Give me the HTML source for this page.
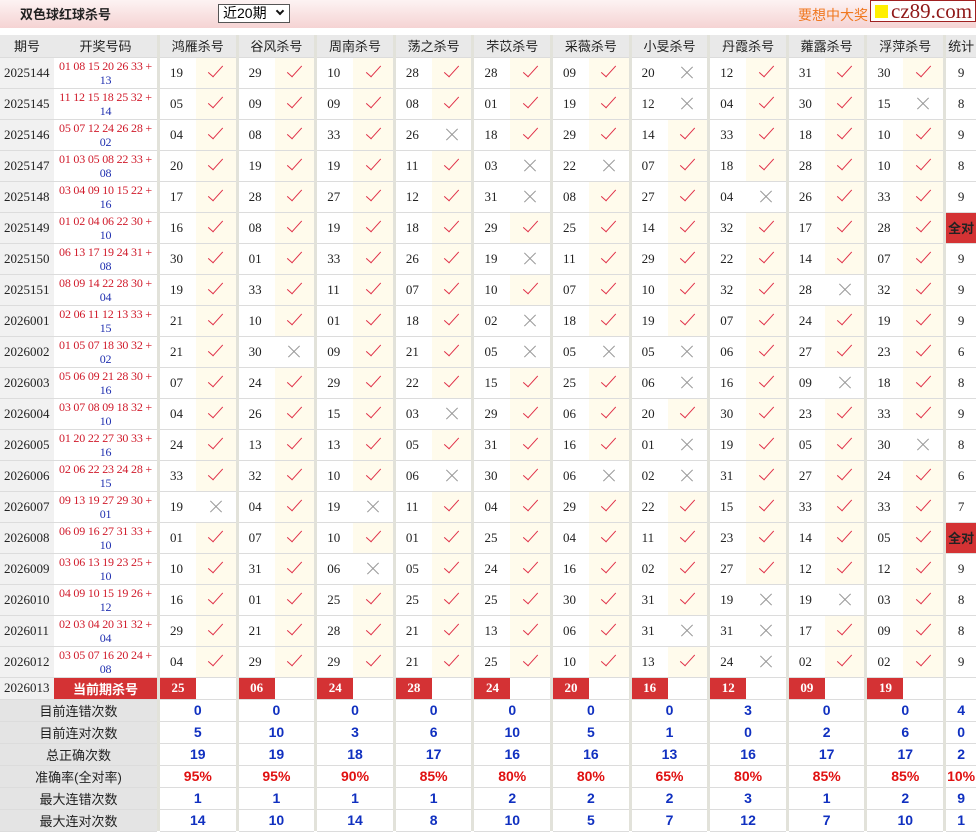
<!DOCTYPE html>
<html><head><meta charset="utf-8"><style>
*{margin:0;padding:0;box-sizing:border-box}
body{width:976px;height:829px;overflow:hidden;background:#fff;font-family:"Liberation Serif","Noto Serif CJK SC",serif;position:relative}
.top{position:absolute;left:0;top:0;width:976px;height:28px;background:linear-gradient(#fdf3f3,#f5d3d3)}
.title{position:absolute;left:20px;top:4px;font:bold 13px "Liberation Sans","Noto Sans CJK SC",sans-serif;color:#222}
.sel{position:absolute;left:218px;top:4px;width:72px;height:19px;border:1px solid #555;background:#fff;font:14px "Liberation Sans","Noto Sans CJK SC",sans-serif;padding-left:4px;line-height:17px}
.sel span{position:absolute;right:6px;top:3px;width:6px;height:6px;border-right:2px solid #111;border-bottom:2px solid #111;transform:rotate(45deg)}
.ad{position:absolute;left:798px;top:5px;font:14px "Liberation Sans","Noto Sans CJK SC",sans-serif;color:#f07820}
.box{position:absolute;left:870px;top:0;width:106px;height:22px;border:1px solid #a02020;background:#fff;font:21px "Liberation Serif",serif;color:#901818;line-height:20px;padding-left:20px}
.box:before{content:"";position:absolute;left:4px;top:4px;width:13px;height:13px;background:#ffef00}
table{position:absolute;left:0;top:35px;width:976px;table-layout:fixed;border-collapse:collapse}
td,th{padding:0;border-bottom:1px solid #dcdcdc;text-align:center;font-size:12px;white-space:nowrap;overflow:hidden}
th{height:22px;background:#e9e9e9;font:13px "Liberation Sans","Noto Sans CJK SC",sans-serif;color:#222;font-weight:normal}
td.s{background:#e2e2da;border-bottom:none}
tr.d td{height:31px;font-size:13px;color:#222}
tr.d td.v{text-align:left;padding-left:10px}
td.q{background:#f1f1f1;font-size:13px;color:#222;text-align:left;padding-left:4px}
tr.d td.k{font-size:12px;line-height:14px;color:#d01a2a;letter-spacing:-0.2px}
td.k em{font-style:normal;color:#2030b0}
td.y{background:#fffbec}
td.y i{display:block;width:7px;height:15px;border-right:1.6px solid #e03048;border-bottom:1.6px solid #e03048;transform:rotate(42deg);margin:-6px auto 0}
td.n i{display:block;width:14px;height:14px;margin:0 auto;position:relative}
td.n i:before,td.n i:after{content:"";position:absolute;left:-1px;top:6px;width:16px;height:1px;background:#999;transform:rotate(45deg)}
td.n i:after{transform:rotate(-45deg)}
td.all{background:#d43234;color:#fff;font:bold 12px "Liberation Sans","Noto Sans CJK SC",sans-serif}
tr.c td{height:22px;font-size:13px}
td.kk{background:#d43234;color:#fff;font:bold 13px "Liberation Sans","Noto Sans CJK SC",sans-serif}
td.r{background:#d43234;color:#fff;font:bold 13px "Liberation Serif",serif}
tr.t td{height:22px;font:bold 14px "Liberation Sans",sans-serif;color:#1030c0}
tr.t td.l{background:#e4e4e4;font:13px "Liberation Sans","Noto Sans CJK SC",sans-serif;color:#222}
tr.p td{color:#e01010}
</style></head><body>
<div class="top"></div>
<div class="title">双色球红球杀号</div>
<div class="sel">近20期<span></span></div>
<div class="ad">要想中大奖，</div>
<div class="box">cz89.com</div>
<table>
<colgroup><col style="width:54px"><col style="width:103px">
<col style="width:3px"><col style="width:36px"><col style="width:39.6px">
<col style="width:3px"><col style="width:36px"><col style="width:39.6px">
<col style="width:3px"><col style="width:36px"><col style="width:39.6px">
<col style="width:3px"><col style="width:36px"><col style="width:39.6px">
<col style="width:3px"><col style="width:36px"><col style="width:39.6px">
<col style="width:3px"><col style="width:36px"><col style="width:39.6px">
<col style="width:3px"><col style="width:36px"><col style="width:39.6px">
<col style="width:3px"><col style="width:36px"><col style="width:39.6px">
<col style="width:3px"><col style="width:36px"><col style="width:39.6px">
<col style="width:3px"><col style="width:36px"><col style="width:39.6px">
<col style="width:3px"><col style="width:30px"></colgroup>
<tr><th>期号</th><th>开奖号码</th><td class="s"></td><th colspan="2">鸿雁杀号</th><td class="s"></td><th colspan="2">谷风杀号</th><td class="s"></td><th colspan="2">周南杀号</th><td class="s"></td><th colspan="2">荡之杀号</th><td class="s"></td><th colspan="2">芣苡杀号</th><td class="s"></td><th colspan="2">采薇杀号</th><td class="s"></td><th colspan="2">小旻杀号</th><td class="s"></td><th colspan="2">丹霞杀号</th><td class="s"></td><th colspan="2">蕹露杀号</th><td class="s"></td><th colspan="2">浮萍杀号</th><td class="s"></td><th>统计</th></tr>
<tr class="d"><td class="q">2025144</td><td class="k">01 08 15 20 26 33 +<br><em>13</em></td><td class="s"></td><td class="v">19</td><td class="y"><i></i></td><td class="s"></td><td class="v">29</td><td class="y"><i></i></td><td class="s"></td><td class="v">10</td><td class="y"><i></i></td><td class="s"></td><td class="v">28</td><td class="y"><i></i></td><td class="s"></td><td class="v">28</td><td class="y"><i></i></td><td class="s"></td><td class="v">09</td><td class="y"><i></i></td><td class="s"></td><td class="v">20</td><td class="n"><i></i></td><td class="s"></td><td class="v">12</td><td class="y"><i></i></td><td class="s"></td><td class="v">31</td><td class="y"><i></i></td><td class="s"></td><td class="v">30</td><td class="y"><i></i></td><td class="s"></td><td>9</td></tr>
<tr class="d"><td class="q">2025145</td><td class="k">11 12 15 18 25 32 +<br><em>14</em></td><td class="s"></td><td class="v">05</td><td class="y"><i></i></td><td class="s"></td><td class="v">09</td><td class="y"><i></i></td><td class="s"></td><td class="v">09</td><td class="y"><i></i></td><td class="s"></td><td class="v">08</td><td class="y"><i></i></td><td class="s"></td><td class="v">01</td><td class="y"><i></i></td><td class="s"></td><td class="v">19</td><td class="y"><i></i></td><td class="s"></td><td class="v">12</td><td class="n"><i></i></td><td class="s"></td><td class="v">04</td><td class="y"><i></i></td><td class="s"></td><td class="v">30</td><td class="y"><i></i></td><td class="s"></td><td class="v">15</td><td class="n"><i></i></td><td class="s"></td><td>8</td></tr>
<tr class="d"><td class="q">2025146</td><td class="k">05 07 12 24 26 28 +<br><em>02</em></td><td class="s"></td><td class="v">04</td><td class="y"><i></i></td><td class="s"></td><td class="v">08</td><td class="y"><i></i></td><td class="s"></td><td class="v">33</td><td class="y"><i></i></td><td class="s"></td><td class="v">26</td><td class="n"><i></i></td><td class="s"></td><td class="v">18</td><td class="y"><i></i></td><td class="s"></td><td class="v">29</td><td class="y"><i></i></td><td class="s"></td><td class="v">14</td><td class="y"><i></i></td><td class="s"></td><td class="v">33</td><td class="y"><i></i></td><td class="s"></td><td class="v">18</td><td class="y"><i></i></td><td class="s"></td><td class="v">10</td><td class="y"><i></i></td><td class="s"></td><td>9</td></tr>
<tr class="d"><td class="q">2025147</td><td class="k">01 03 05 08 22 33 +<br><em>08</em></td><td class="s"></td><td class="v">20</td><td class="y"><i></i></td><td class="s"></td><td class="v">19</td><td class="y"><i></i></td><td class="s"></td><td class="v">19</td><td class="y"><i></i></td><td class="s"></td><td class="v">11</td><td class="y"><i></i></td><td class="s"></td><td class="v">03</td><td class="n"><i></i></td><td class="s"></td><td class="v">22</td><td class="n"><i></i></td><td class="s"></td><td class="v">07</td><td class="y"><i></i></td><td class="s"></td><td class="v">18</td><td class="y"><i></i></td><td class="s"></td><td class="v">28</td><td class="y"><i></i></td><td class="s"></td><td class="v">10</td><td class="y"><i></i></td><td class="s"></td><td>8</td></tr>
<tr class="d"><td class="q">2025148</td><td class="k">03 04 09 10 15 22 +<br><em>16</em></td><td class="s"></td><td class="v">17</td><td class="y"><i></i></td><td class="s"></td><td class="v">28</td><td class="y"><i></i></td><td class="s"></td><td class="v">27</td><td class="y"><i></i></td><td class="s"></td><td class="v">12</td><td class="y"><i></i></td><td class="s"></td><td class="v">31</td><td class="n"><i></i></td><td class="s"></td><td class="v">08</td><td class="y"><i></i></td><td class="s"></td><td class="v">27</td><td class="y"><i></i></td><td class="s"></td><td class="v">04</td><td class="n"><i></i></td><td class="s"></td><td class="v">26</td><td class="y"><i></i></td><td class="s"></td><td class="v">33</td><td class="y"><i></i></td><td class="s"></td><td>9</td></tr>
<tr class="d"><td class="q">2025149</td><td class="k">01 02 04 06 22 30 +<br><em>10</em></td><td class="s"></td><td class="v">16</td><td class="y"><i></i></td><td class="s"></td><td class="v">08</td><td class="y"><i></i></td><td class="s"></td><td class="v">19</td><td class="y"><i></i></td><td class="s"></td><td class="v">18</td><td class="y"><i></i></td><td class="s"></td><td class="v">29</td><td class="y"><i></i></td><td class="s"></td><td class="v">25</td><td class="y"><i></i></td><td class="s"></td><td class="v">14</td><td class="y"><i></i></td><td class="s"></td><td class="v">32</td><td class="y"><i></i></td><td class="s"></td><td class="v">17</td><td class="y"><i></i></td><td class="s"></td><td class="v">28</td><td class="y"><i></i></td><td class="s"></td><td class="all">全对</td></tr>
<tr class="d"><td class="q">2025150</td><td class="k">06 13 17 19 24 31 +<br><em>08</em></td><td class="s"></td><td class="v">30</td><td class="y"><i></i></td><td class="s"></td><td class="v">01</td><td class="y"><i></i></td><td class="s"></td><td class="v">33</td><td class="y"><i></i></td><td class="s"></td><td class="v">26</td><td class="y"><i></i></td><td class="s"></td><td class="v">19</td><td class="n"><i></i></td><td class="s"></td><td class="v">11</td><td class="y"><i></i></td><td class="s"></td><td class="v">29</td><td class="y"><i></i></td><td class="s"></td><td class="v">22</td><td class="y"><i></i></td><td class="s"></td><td class="v">14</td><td class="y"><i></i></td><td class="s"></td><td class="v">07</td><td class="y"><i></i></td><td class="s"></td><td>9</td></tr>
<tr class="d"><td class="q">2025151</td><td class="k">08 09 14 22 28 30 +<br><em>04</em></td><td class="s"></td><td class="v">19</td><td class="y"><i></i></td><td class="s"></td><td class="v">33</td><td class="y"><i></i></td><td class="s"></td><td class="v">11</td><td class="y"><i></i></td><td class="s"></td><td class="v">07</td><td class="y"><i></i></td><td class="s"></td><td class="v">10</td><td class="y"><i></i></td><td class="s"></td><td class="v">07</td><td class="y"><i></i></td><td class="s"></td><td class="v">10</td><td class="y"><i></i></td><td class="s"></td><td class="v">32</td><td class="y"><i></i></td><td class="s"></td><td class="v">28</td><td class="n"><i></i></td><td class="s"></td><td class="v">32</td><td class="y"><i></i></td><td class="s"></td><td>9</td></tr>
<tr class="d"><td class="q">2026001</td><td class="k">02 06 11 12 13 33 +<br><em>15</em></td><td class="s"></td><td class="v">21</td><td class="y"><i></i></td><td class="s"></td><td class="v">10</td><td class="y"><i></i></td><td class="s"></td><td class="v">01</td><td class="y"><i></i></td><td class="s"></td><td class="v">18</td><td class="y"><i></i></td><td class="s"></td><td class="v">02</td><td class="n"><i></i></td><td class="s"></td><td class="v">18</td><td class="y"><i></i></td><td class="s"></td><td class="v">19</td><td class="y"><i></i></td><td class="s"></td><td class="v">07</td><td class="y"><i></i></td><td class="s"></td><td class="v">24</td><td class="y"><i></i></td><td class="s"></td><td class="v">19</td><td class="y"><i></i></td><td class="s"></td><td>9</td></tr>
<tr class="d"><td class="q">2026002</td><td class="k">01 05 07 18 30 32 +<br><em>02</em></td><td class="s"></td><td class="v">21</td><td class="y"><i></i></td><td class="s"></td><td class="v">30</td><td class="n"><i></i></td><td class="s"></td><td class="v">09</td><td class="y"><i></i></td><td class="s"></td><td class="v">21</td><td class="y"><i></i></td><td class="s"></td><td class="v">05</td><td class="n"><i></i></td><td class="s"></td><td class="v">05</td><td class="n"><i></i></td><td class="s"></td><td class="v">05</td><td class="n"><i></i></td><td class="s"></td><td class="v">06</td><td class="y"><i></i></td><td class="s"></td><td class="v">27</td><td class="y"><i></i></td><td class="s"></td><td class="v">23</td><td class="y"><i></i></td><td class="s"></td><td>6</td></tr>
<tr class="d"><td class="q">2026003</td><td class="k">05 06 09 21 28 30 +<br><em>16</em></td><td class="s"></td><td class="v">07</td><td class="y"><i></i></td><td class="s"></td><td class="v">24</td><td class="y"><i></i></td><td class="s"></td><td class="v">29</td><td class="y"><i></i></td><td class="s"></td><td class="v">22</td><td class="y"><i></i></td><td class="s"></td><td class="v">15</td><td class="y"><i></i></td><td class="s"></td><td class="v">25</td><td class="y"><i></i></td><td class="s"></td><td class="v">06</td><td class="n"><i></i></td><td class="s"></td><td class="v">16</td><td class="y"><i></i></td><td class="s"></td><td class="v">09</td><td class="n"><i></i></td><td class="s"></td><td class="v">18</td><td class="y"><i></i></td><td class="s"></td><td>8</td></tr>
<tr class="d"><td class="q">2026004</td><td class="k">03 07 08 09 18 32 +<br><em>10</em></td><td class="s"></td><td class="v">04</td><td class="y"><i></i></td><td class="s"></td><td class="v">26</td><td class="y"><i></i></td><td class="s"></td><td class="v">15</td><td class="y"><i></i></td><td class="s"></td><td class="v">03</td><td class="n"><i></i></td><td class="s"></td><td class="v">29</td><td class="y"><i></i></td><td class="s"></td><td class="v">06</td><td class="y"><i></i></td><td class="s"></td><td class="v">20</td><td class="y"><i></i></td><td class="s"></td><td class="v">30</td><td class="y"><i></i></td><td class="s"></td><td class="v">23</td><td class="y"><i></i></td><td class="s"></td><td class="v">33</td><td class="y"><i></i></td><td class="s"></td><td>9</td></tr>
<tr class="d"><td class="q">2026005</td><td class="k">01 20 22 27 30 33 +<br><em>16</em></td><td class="s"></td><td class="v">24</td><td class="y"><i></i></td><td class="s"></td><td class="v">13</td><td class="y"><i></i></td><td class="s"></td><td class="v">13</td><td class="y"><i></i></td><td class="s"></td><td class="v">05</td><td class="y"><i></i></td><td class="s"></td><td class="v">31</td><td class="y"><i></i></td><td class="s"></td><td class="v">16</td><td class="y"><i></i></td><td class="s"></td><td class="v">01</td><td class="n"><i></i></td><td class="s"></td><td class="v">19</td><td class="y"><i></i></td><td class="s"></td><td class="v">05</td><td class="y"><i></i></td><td class="s"></td><td class="v">30</td><td class="n"><i></i></td><td class="s"></td><td>8</td></tr>
<tr class="d"><td class="q">2026006</td><td class="k">02 06 22 23 24 28 +<br><em>15</em></td><td class="s"></td><td class="v">33</td><td class="y"><i></i></td><td class="s"></td><td class="v">32</td><td class="y"><i></i></td><td class="s"></td><td class="v">10</td><td class="y"><i></i></td><td class="s"></td><td class="v">06</td><td class="n"><i></i></td><td class="s"></td><td class="v">30</td><td class="y"><i></i></td><td class="s"></td><td class="v">06</td><td class="n"><i></i></td><td class="s"></td><td class="v">02</td><td class="n"><i></i></td><td class="s"></td><td class="v">31</td><td class="y"><i></i></td><td class="s"></td><td class="v">27</td><td class="y"><i></i></td><td class="s"></td><td class="v">24</td><td class="y"><i></i></td><td class="s"></td><td>6</td></tr>
<tr class="d"><td class="q">2026007</td><td class="k">09 13 19 27 29 30 +<br><em>01</em></td><td class="s"></td><td class="v">19</td><td class="n"><i></i></td><td class="s"></td><td class="v">04</td><td class="y"><i></i></td><td class="s"></td><td class="v">19</td><td class="n"><i></i></td><td class="s"></td><td class="v">11</td><td class="y"><i></i></td><td class="s"></td><td class="v">04</td><td class="y"><i></i></td><td class="s"></td><td class="v">29</td><td class="y"><i></i></td><td class="s"></td><td class="v">22</td><td class="y"><i></i></td><td class="s"></td><td class="v">15</td><td class="y"><i></i></td><td class="s"></td><td class="v">33</td><td class="y"><i></i></td><td class="s"></td><td class="v">33</td><td class="y"><i></i></td><td class="s"></td><td>7</td></tr>
<tr class="d"><td class="q">2026008</td><td class="k">06 09 16 27 31 33 +<br><em>10</em></td><td class="s"></td><td class="v">01</td><td class="y"><i></i></td><td class="s"></td><td class="v">07</td><td class="y"><i></i></td><td class="s"></td><td class="v">10</td><td class="y"><i></i></td><td class="s"></td><td class="v">01</td><td class="y"><i></i></td><td class="s"></td><td class="v">25</td><td class="y"><i></i></td><td class="s"></td><td class="v">04</td><td class="y"><i></i></td><td class="s"></td><td class="v">11</td><td class="y"><i></i></td><td class="s"></td><td class="v">23</td><td class="y"><i></i></td><td class="s"></td><td class="v">14</td><td class="y"><i></i></td><td class="s"></td><td class="v">05</td><td class="y"><i></i></td><td class="s"></td><td class="all">全对</td></tr>
<tr class="d"><td class="q">2026009</td><td class="k">03 06 13 19 23 25 +<br><em>10</em></td><td class="s"></td><td class="v">10</td><td class="y"><i></i></td><td class="s"></td><td class="v">31</td><td class="y"><i></i></td><td class="s"></td><td class="v">06</td><td class="n"><i></i></td><td class="s"></td><td class="v">05</td><td class="y"><i></i></td><td class="s"></td><td class="v">24</td><td class="y"><i></i></td><td class="s"></td><td class="v">16</td><td class="y"><i></i></td><td class="s"></td><td class="v">02</td><td class="y"><i></i></td><td class="s"></td><td class="v">27</td><td class="y"><i></i></td><td class="s"></td><td class="v">12</td><td class="y"><i></i></td><td class="s"></td><td class="v">12</td><td class="y"><i></i></td><td class="s"></td><td>9</td></tr>
<tr class="d"><td class="q">2026010</td><td class="k">04 09 10 15 19 26 +<br><em>12</em></td><td class="s"></td><td class="v">16</td><td class="y"><i></i></td><td class="s"></td><td class="v">01</td><td class="y"><i></i></td><td class="s"></td><td class="v">25</td><td class="y"><i></i></td><td class="s"></td><td class="v">25</td><td class="y"><i></i></td><td class="s"></td><td class="v">25</td><td class="y"><i></i></td><td class="s"></td><td class="v">30</td><td class="y"><i></i></td><td class="s"></td><td class="v">31</td><td class="y"><i></i></td><td class="s"></td><td class="v">19</td><td class="n"><i></i></td><td class="s"></td><td class="v">19</td><td class="n"><i></i></td><td class="s"></td><td class="v">03</td><td class="y"><i></i></td><td class="s"></td><td>8</td></tr>
<tr class="d"><td class="q">2026011</td><td class="k">02 03 04 20 31 32 +<br><em>04</em></td><td class="s"></td><td class="v">29</td><td class="y"><i></i></td><td class="s"></td><td class="v">21</td><td class="y"><i></i></td><td class="s"></td><td class="v">28</td><td class="y"><i></i></td><td class="s"></td><td class="v">21</td><td class="y"><i></i></td><td class="s"></td><td class="v">13</td><td class="y"><i></i></td><td class="s"></td><td class="v">06</td><td class="y"><i></i></td><td class="s"></td><td class="v">31</td><td class="n"><i></i></td><td class="s"></td><td class="v">31</td><td class="n"><i></i></td><td class="s"></td><td class="v">17</td><td class="y"><i></i></td><td class="s"></td><td class="v">09</td><td class="y"><i></i></td><td class="s"></td><td>8</td></tr>
<tr class="d"><td class="q">2026012</td><td class="k">03 05 07 16 20 24 +<br><em>08</em></td><td class="s"></td><td class="v">04</td><td class="y"><i></i></td><td class="s"></td><td class="v">29</td><td class="y"><i></i></td><td class="s"></td><td class="v">29</td><td class="y"><i></i></td><td class="s"></td><td class="v">21</td><td class="y"><i></i></td><td class="s"></td><td class="v">25</td><td class="y"><i></i></td><td class="s"></td><td class="v">10</td><td class="y"><i></i></td><td class="s"></td><td class="v">13</td><td class="y"><i></i></td><td class="s"></td><td class="v">24</td><td class="n"><i></i></td><td class="s"></td><td class="v">02</td><td class="y"><i></i></td><td class="s"></td><td class="v">02</td><td class="y"><i></i></td><td class="s"></td><td>9</td></tr>
<tr class="c"><td class="q">2026013</td><td class="kk">当前期杀号</td><td class="s"></td><td class="r">25</td><td></td><td class="s"></td><td class="r">06</td><td></td><td class="s"></td><td class="r">24</td><td></td><td class="s"></td><td class="r">28</td><td></td><td class="s"></td><td class="r">24</td><td></td><td class="s"></td><td class="r">20</td><td></td><td class="s"></td><td class="r">16</td><td></td><td class="s"></td><td class="r">12</td><td></td><td class="s"></td><td class="r">09</td><td></td><td class="s"></td><td class="r">19</td><td></td><td class="s"></td><td></td></tr>
<tr class="t"><td colspan="2" class="l">目前连错次数</td><td class="s"></td><td colspan="2">0</td><td class="s"></td><td colspan="2">0</td><td class="s"></td><td colspan="2">0</td><td class="s"></td><td colspan="2">0</td><td class="s"></td><td colspan="2">0</td><td class="s"></td><td colspan="2">0</td><td class="s"></td><td colspan="2">0</td><td class="s"></td><td colspan="2">3</td><td class="s"></td><td colspan="2">0</td><td class="s"></td><td colspan="2">0</td><td class="s"></td><td>4</td></tr>
<tr class="t"><td colspan="2" class="l">目前连对次数</td><td class="s"></td><td colspan="2">5</td><td class="s"></td><td colspan="2">10</td><td class="s"></td><td colspan="2">3</td><td class="s"></td><td colspan="2">6</td><td class="s"></td><td colspan="2">10</td><td class="s"></td><td colspan="2">5</td><td class="s"></td><td colspan="2">1</td><td class="s"></td><td colspan="2">0</td><td class="s"></td><td colspan="2">2</td><td class="s"></td><td colspan="2">6</td><td class="s"></td><td>0</td></tr>
<tr class="t"><td colspan="2" class="l">总正确次数</td><td class="s"></td><td colspan="2">19</td><td class="s"></td><td colspan="2">19</td><td class="s"></td><td colspan="2">18</td><td class="s"></td><td colspan="2">17</td><td class="s"></td><td colspan="2">16</td><td class="s"></td><td colspan="2">16</td><td class="s"></td><td colspan="2">13</td><td class="s"></td><td colspan="2">16</td><td class="s"></td><td colspan="2">17</td><td class="s"></td><td colspan="2">17</td><td class="s"></td><td>2</td></tr>
<tr class="t p"><td colspan="2" class="l">准确率(全对率)</td><td class="s"></td><td colspan="2">95%</td><td class="s"></td><td colspan="2">95%</td><td class="s"></td><td colspan="2">90%</td><td class="s"></td><td colspan="2">85%</td><td class="s"></td><td colspan="2">80%</td><td class="s"></td><td colspan="2">80%</td><td class="s"></td><td colspan="2">65%</td><td class="s"></td><td colspan="2">80%</td><td class="s"></td><td colspan="2">85%</td><td class="s"></td><td colspan="2">85%</td><td class="s"></td><td>10%</td></tr>
<tr class="t"><td colspan="2" class="l">最大连错次数</td><td class="s"></td><td colspan="2">1</td><td class="s"></td><td colspan="2">1</td><td class="s"></td><td colspan="2">1</td><td class="s"></td><td colspan="2">1</td><td class="s"></td><td colspan="2">2</td><td class="s"></td><td colspan="2">2</td><td class="s"></td><td colspan="2">2</td><td class="s"></td><td colspan="2">3</td><td class="s"></td><td colspan="2">1</td><td class="s"></td><td colspan="2">2</td><td class="s"></td><td>9</td></tr>
<tr class="t"><td colspan="2" class="l">最大连对次数</td><td class="s"></td><td colspan="2">14</td><td class="s"></td><td colspan="2">10</td><td class="s"></td><td colspan="2">14</td><td class="s"></td><td colspan="2">8</td><td class="s"></td><td colspan="2">10</td><td class="s"></td><td colspan="2">5</td><td class="s"></td><td colspan="2">7</td><td class="s"></td><td colspan="2">12</td><td class="s"></td><td colspan="2">7</td><td class="s"></td><td colspan="2">10</td><td class="s"></td><td>1</td></tr>
</table>
</body></html>
